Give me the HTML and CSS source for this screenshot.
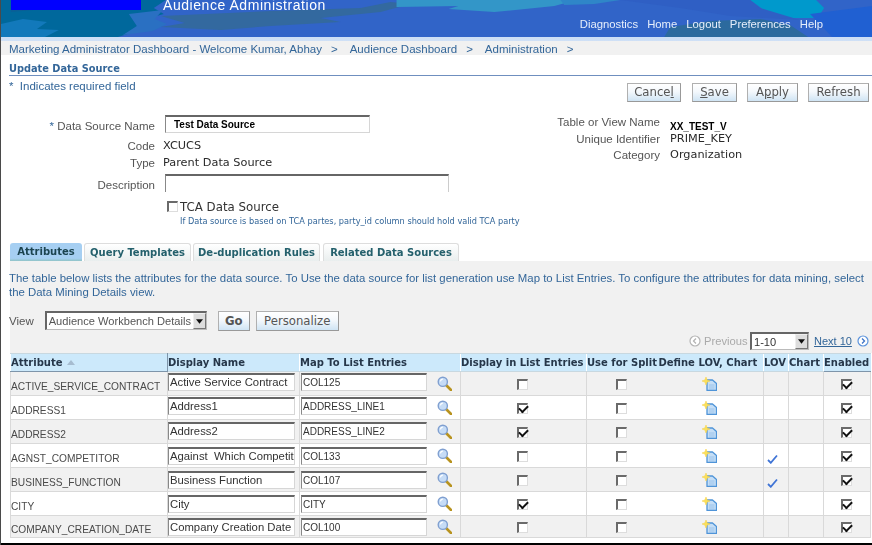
FILE: index.html
```html
<!DOCTYPE html>
<html lang="en">
<head>
<meta charset="utf-8">
<title>Update Data Source</title>
<link rel="stylesheet" href="styles.css">
</head>
<body>
<svg class="defs" width="0" height="0" aria-hidden="true">
  <defs>
    <symbol id="i-search" viewBox="0 0 15 15">
      <path d="M9 9l5 5" stroke="#b8931f" stroke-width="2.6" stroke-linecap="round"/>
      <circle cx="5.8" cy="5.8" r="4.6" fill="#c6dcf6" stroke="#7f9fd0" stroke-width="1.4"/>
      <path d="M3.4 5.4a2.6 2.6 0 0 1 2.4-2.2" fill="none" stroke="#fff" stroke-width="1.2"/>
    </symbol>
    <symbol id="i-doc" viewBox="0 0 15 14">
      <path d="M5 3h5.500l4 3.500V13.500H5z" fill="#c5def6" stroke="#4f94d8" stroke-width="1.3" stroke-linejoin="round"/>
      <path d="M7 8h5.500M7 10h5.500M7 12h5.500" stroke="#8fbcea" stroke-width=".8"/>
      <path d="M4 0l1.100 2.900L8 4 5.100 5.100 4 8 2.900 5.100 0 4l2.900-1.100z" fill="#fbe05a" stroke="#f6cf3e" stroke-width=".5"/>
    </symbol>
    <symbol id="i-tick" viewBox="0 0 11 10">
      <path d="M1 6l2.800 2.800L10 1.500" fill="none" stroke="#3f74d6" stroke-width="1.800"/>
    </symbol>
    <symbol id="i-prev" viewBox="0 0 12 12">
      <circle cx="6" cy="6" r="5" fill="#fff" stroke="#b4b4b4" stroke-width="1.200"/>
      <path d="M7 3.500L4.500 6 7 8.500" fill="none" stroke="#b4b4b4" stroke-width="1.300"/>
    </symbol>
    <symbol id="i-next" viewBox="0 0 12 12">
      <circle cx="6" cy="6" r="5" fill="#fff" stroke="#5c93dc" stroke-width="1.200"/>
      <path d="M5 3.500L7.500 6 5 8.500" fill="none" stroke="#3f74c6" stroke-width="1.300"/>
    </symbol>
    <symbol id="i-down" viewBox="0 0 8 5">
      <path d="M0 0h8L4 5z" fill="#111"/>
    </symbol>
  </defs>
</svg>

<div class="page">
  <header class="banner">
    <svg class="banner-art" viewBox="0 0 872 37" preserveAspectRatio="none" aria-hidden="true">
      <rect width="872" height="37" fill="#3164c8"/>
      <path d="M0 0h165l-12 8 10 6-22 6 6 8-30 9H0z" fill="#00689c"/>
      <path d="M0 24l22-5 24 3-10 7 22 1-14 7H0z" fill="#1279bb"/>
      <path d="M10 0h20l-8 5 10 5-22 2z" fill="#0a5f96"/>
      <path d="M128 14l34-4-8 9 12 5-14 7-30 4 14-9z" fill="#2a70c2"/>
      <path d="M160 16l110-5 90-3 30-6 20 2-30 8-60 6 20 4-70 4-50 4-60-3 24-4z" fill="#33699f"/>
      <path d="M396 0h180l-22 6-60 6-46-3 10-3-62 1z" fill="#3396c8"/>
      <path d="M560 0h60l-26 4-30 1z" fill="#2f86c8"/>
      <path d="M750 0h66l8 8-6 10-30 0-24-8z" fill="#0099cc"/>
      <path d="M664 37l6-10 40-6 50-2 30 6 18 12z" fill="#2c6a9e"/>
      <path d="M810 14l62-8v31h-40z" fill="#2060d2"/>
      <path d="M620 0h130l10 8 40 12-70-4-50-8z" fill="#2f5fc4"/>
    </svg>
    <div class="brand-block"></div>
    <h1 class="app-title">Audience Administration</h1>
    <nav class="global-nav">
      <a>Diagnostics</a><a>Home</a><a>Logout</a><a>Preferences</a><a>Help</a>
    </nav>
  </header>

  <div class="crumbs">
    <a>Marketing Administrator Dashboard - Welcome Kumar, Abhay</a><b>&gt;</b>
    <a>Audience Dashboard</a><b>&gt;</b>
    <a>Administration</a><b>&gt;</b>
  </div>

  <h2 class="page-title">Update Data Source</h2>

  <div class="action-row">
    <p class="required">*&nbsp; Indicates required field</p>
    <div class="actions">
      <button class="btn btn-cancel">Cance<u>l</u></button>
      <button class="btn btn-save"><u>S</u>ave</button>
      <button class="btn btn-apply">A<u>p</u>ply</button>
      <button class="btn btn-refresh">Refresh</button>
    </div>
  </div>

  <section class="details">
    <div class="form-left">
      <label class="lbl"><span class="star">*</span> Data Source Name</label>
      <input class="field field-name" value="Test Data Source" readonly>
      <span class="lbl">Code</span><span class="val">XCUCS</span>
      <span class="lbl">Type</span><span class="val">Parent Data Source</span>
      <label class="lbl">Description</label>
      <input class="field field-desc" readonly>
      <span></span>
      <div class="tca">
        <input type="checkbox" class="chk" aria-label="TCA Data Source">
        <div>
          <span class="tca-label">TCA Data Source</span>
          <p class="tca-help">If Data source is based on TCA partes, party_id column should hold valid TCA party</p>
        </div>
      </div>
    </div>
    <div class="form-right">
      <span class="lbl">Table or View Name</span><span class="val val-strong">XX_TEST_V</span>
      <span class="lbl">Unique Identifier</span><span class="val">PRIME_KEY</span>
      <span class="lbl">Category</span><span class="val">Organization</span>
    </div>
  </section>

  <div class="tabs">
    <a class="tab tab-on tab-1">Attributes</a>
    <a class="tab tab-2">Query Templates</a>
    <a class="tab tab-3">De-duplication Rules</a>
    <a class="tab tab-4">Related Data Sources</a>
  </div>

  <section class="panel">
    <p class="intro">The table below lists the attributes for the data source. To Use the data source for list generation use Map to List Entries. To configure the attributes for data mining, select the Data Mining Details view.</p>
    <div class="view-row">
      <span class="view-label">View</span>
      <div class="select select-view"><span>Audience Workbench Details</span><i class="arrow"><svg><use href="#i-down"/></svg></i></div>
      <button class="btn btn-go">Go</button>
      <button class="btn btn-pers">Personalize</button>
    </div>
    <div class="pager">
      <svg class="pg-icon"><use href="#i-prev"/></svg>
      <span class="pg-prev">Previous</span>
      <div class="select select-page"><span>1-10</span><i class="arrow"><svg><use href="#i-down"/></svg></i></div>
      <a class="pg-next">Next 10</a>
      <svg class="pg-icon"><use href="#i-next"/></svg>
    </div>
  </section>

  <table class="grid">
    <colgroup>
      <col class="c1"><col class="c2"><col class="c3"><col class="c4"><col class="c5"><col class="c6"><col class="c7"><col class="c8"><col class="c9">
    </colgroup>
    <thead>
      <tr>
        <th class="th-sort">Attribute <span class="sort"></span></th>
        <th>Display Name</th>
        <th>Map To List Entries</th>
        <th>Display in List Entries</th>
        <th class="no-r">Use for Split</th>
        <th class="no-l">Define LOV, Chart</th>
        <th>LOV</th>
        <th>Chart</th>
        <th class="th-en">Enabled</th>
      </tr>
    </thead>
    <tbody>
      <tr>
        <td class="attr">ACTIVE_SERVICE_CONTRACT</td>
        <td><input class="field cell-in" value="Active Service Contract" readonly></td>
        <td class="map"><input class="field cell-in" value="COL125" readonly><svg class="ic-search"><use href="#i-search"/></svg></td>
        <td class="ctr"><input type="checkbox" class="chk" aria-label="Display"></td>
        <td class="ctr no-r"><input type="checkbox" class="chk" aria-label="Split"></td>
        <td class="ctr no-l"><svg class="ic-doc"><use href="#i-doc"/></svg></td>
        <td></td><td></td>
        <td class="ctr"><input type="checkbox" class="chk" checked aria-label="Enabled"></td>
      </tr>
      <tr>
        <td class="attr">ADDRESS1</td>
        <td><input class="field cell-in" value="Address1" readonly></td>
        <td class="map"><input class="field cell-in" value="ADDRESS_LINE1" readonly><svg class="ic-search"><use href="#i-search"/></svg></td>
        <td class="ctr"><input type="checkbox" class="chk" checked aria-label="Display"></td>
        <td class="ctr no-r"><input type="checkbox" class="chk" aria-label="Split"></td>
        <td class="ctr no-l"><svg class="ic-doc"><use href="#i-doc"/></svg></td>
        <td></td><td></td>
        <td class="ctr"><input type="checkbox" class="chk" checked aria-label="Enabled"></td>
      </tr>
      <tr>
        <td class="attr">ADDRESS2</td>
        <td><input class="field cell-in" value="Address2" readonly></td>
        <td class="map"><input class="field cell-in" value="ADDRESS_LINE2" readonly><svg class="ic-search"><use href="#i-search"/></svg></td>
        <td class="ctr"><input type="checkbox" class="chk" checked aria-label="Display"></td>
        <td class="ctr no-r"><input type="checkbox" class="chk" aria-label="Split"></td>
        <td class="ctr no-l"><svg class="ic-doc"><use href="#i-doc"/></svg></td>
        <td></td><td></td>
        <td class="ctr"><input type="checkbox" class="chk" checked aria-label="Enabled"></td>
      </tr>
      <tr>
        <td class="attr">AGNST_COMPETITOR</td>
        <td><input class="field cell-in" value="Against  Which Competitor" readonly></td>
        <td class="map"><input class="field cell-in" value="COL133" readonly><svg class="ic-search"><use href="#i-search"/></svg></td>
        <td class="ctr"><input type="checkbox" class="chk" aria-label="Display"></td>
        <td class="ctr no-r"><input type="checkbox" class="chk" aria-label="Split"></td>
        <td class="ctr no-l"><svg class="ic-doc"><use href="#i-doc"/></svg></td>
        <td class="lov"><svg class="ic-tick"><use href="#i-tick"/></svg></td><td></td>
        <td class="ctr"><input type="checkbox" class="chk" checked aria-label="Enabled"></td>
      </tr>
      <tr>
        <td class="attr">BUSINESS_FUNCTION</td>
        <td><input class="field cell-in" value="Business Function" readonly></td>
        <td class="map"><input class="field cell-in" value="COL107" readonly><svg class="ic-search"><use href="#i-search"/></svg></td>
        <td class="ctr"><input type="checkbox" class="chk" aria-label="Display"></td>
        <td class="ctr no-r"><input type="checkbox" class="chk" aria-label="Split"></td>
        <td class="ctr no-l"><svg class="ic-doc"><use href="#i-doc"/></svg></td>
        <td class="lov"><svg class="ic-tick"><use href="#i-tick"/></svg></td><td></td>
        <td class="ctr"><input type="checkbox" class="chk" checked aria-label="Enabled"></td>
      </tr>
      <tr>
        <td class="attr">CITY</td>
        <td><input class="field cell-in" value="City" readonly></td>
        <td class="map"><input class="field cell-in" value="CITY" readonly><svg class="ic-search"><use href="#i-search"/></svg></td>
        <td class="ctr"><input type="checkbox" class="chk" checked aria-label="Display"></td>
        <td class="ctr no-r"><input type="checkbox" class="chk" aria-label="Split"></td>
        <td class="ctr no-l"><svg class="ic-doc"><use href="#i-doc"/></svg></td>
        <td></td><td></td>
        <td class="ctr"><input type="checkbox" class="chk" checked aria-label="Enabled"></td>
      </tr>
      <tr class="last">
        <td class="attr">COMPANY_CREATION_DATE</td>
        <td><input class="field cell-in" value="Company Creation Date" readonly></td>
        <td class="map"><input class="field cell-in" value="COL100" readonly><svg class="ic-search"><use href="#i-search"/></svg></td>
        <td class="ctr"><input type="checkbox" class="chk" aria-label="Display"></td>
        <td class="ctr no-r"><input type="checkbox" class="chk" aria-label="Split"></td>
        <td class="ctr no-l"><svg class="ic-doc"><use href="#i-doc"/></svg></td>
        <td></td><td></td>
        <td class="ctr"><input type="checkbox" class="chk" checked aria-label="Enabled"></td>
      </tr>
    </tbody>
  </table>
  <div class="bottom-edge"></div>
</div>
</body>
</html>
```

FILE: styles.css
```css
* { box-sizing: border-box; }
html, body { margin: 0; padding: 0; height: 100%; background: #fff; overflow: hidden; }
.defs { position: absolute; }
body { font-family: "Liberation Sans", Arial, sans-serif; font-size: 12px; color: #333; }
p, h1, h2 { margin: 0; }

.page {
  width: 872px; height: 545px; overflow: hidden;
  display: flex; flex-direction: column;
  border-left: 1px solid #4a4a4a;
  filter: blur(.35px);
}

/* Banner */
.banner {
  position: relative; flex: 0 0 41px; height: 41px;
  border-bottom: 4px solid #a8c4ee;
  border-image: linear-gradient(#7fa8e8, #cfe0f6) 1;
  display: flex; align-items: flex-start;
  padding-left: 10px;
}
.banner-art { position: absolute; left: 0; top: 0; width: 100%; height: 37px; }
.brand-block { position: relative; width: 130px; height: 10px; background: #0000ff; }
.app-title {
  position: relative; margin: 0 0 0 22px;
  font-size: 14px; font-weight: 400; line-height: 11px; color: #fff; letter-spacing: .55px;
}
.global-nav {
  position: absolute; right: 49px; top: 17px;
  display: flex; gap: 9px; color: #e6eefb; font-size: 11.300px; line-height: 14px;
}

/* Breadcrumb */
.crumbs {
  flex: 0 0 14px; height: 14px; background: #f1f1f1; color: #336699; font-size: 11.500px;
  padding-left: 8px; line-height: 17px; white-space: nowrap; display: flex;
}
.crumbs b { font-weight: 400; margin: 0 12px 0 9px; }

/* Title */
.page-title {
  margin: 7px 0 0 8px; height: 14px; line-height: 13px;
  font-weight: 700; color: #336699;
  border-bottom: 1px solid #6f8fbf; flex: none;
  font-family: "DejaVu Sans", sans-serif; font-size: 9.800px;
}

.action-row { display: flex; justify-content: space-between; padding: 6px 3px 0 8px; flex: none; height: 29px; }
.required { color: #336699; line-height: 12px; font-size: 11.500px; margin-top: -2px; }
.actions { display: flex; gap: 10px; margin-top: 1px; }

.btn {
  height: 19px; padding: 0; font: 400 11.700px/15px "DejaVu Sans", sans-serif; color: #555;
  border: 1px solid #b0b0b0; border-right-color: #999; border-bottom-color: #999;
  background: linear-gradient(#fff 0%, #f4f8fc 45%, #cfe4f4 100%);
}
.btn-cancel { width: 54px; margin-right: 1px; }
.btn-save { width: 45px; }
.btn-apply { width: 51px; }
.btn-refresh { width: 61px; }

/* Details */
.details { flex: none; height: 138px; display: flex; }
.form-left {
  display: grid; grid-template-columns: 154px auto; column-gap: 10px;
  grid-template-rows: 18px 20px 17px 22px auto; align-items: end; align-content: start;
  padding-top: 10px; width: 530px;
}
.form-right {
  display: grid; grid-template-columns: 129px auto; column-gap: 10px;
  grid-auto-rows: 16.500px; align-items: center; align-content: start; padding-top: 9px;
}
.lbl { text-align: right; color: #555; font-size: 11.500px; line-height: 14px; white-space: nowrap; }
.star { color: #336699; }
.val { font: 400 11.300px/14px "DejaVu Sans", sans-serif; color: #2a2a2a; white-space: nowrap; }
.form-left .val { margin-left: -2px; }
.val-strong { font: 700 10px/14px "Liberation Sans", sans-serif; color: #000; align-self: end; margin-bottom: -3px; }
.field {
  display: block; margin: 0; background: #fff; color: #333;
  border: 1px solid #d6d6d6; border-top: 2px solid #666; border-left: 1px solid #888;
  font: 400 11.300px "Liberation Sans", sans-serif; padding: 0 0 0 1px; outline: 0;
}
.field-name { width: 205px; height: 18px; padding-left: 8px; font: 700 10px "Liberation Sans", sans-serif; color: #000; }
.field-desc { width: 284px; height: 18px; border-bottom: 0; border-right: 1px solid #ccc; }
.tca { display: flex; gap: 2px; margin: 9px 0 0 2px; }
.tca-label { font: 400 11.800px/12px "DejaVu Sans", sans-serif; color: #333; display: block; }
.tca-help { font: 400 8.200px/12px "DejaVu Sans", sans-serif; color: #336699; white-space: nowrap; margin-top: 2px; }

.chk {
  appearance: none; -webkit-appearance: none; margin: 0; flex: none;
  width: 11px; height: 11px; background: #fff; position: relative; display: inline-block;
  border: 1px solid #ddd; border-top: 2px solid #6a6a6a; border-left: 2px solid #6a6a6a;
  vertical-align: middle;
}
.chk:checked::after {
  content: ""; position: absolute; left: 0; top: 0; width: 7px; height: 4px;
  border-left: 2px solid #111; border-bottom: 2px solid #111; transform: rotate(-45deg);
}

/* Tabs */
.tabs { flex: none; height: 18px; display: flex; padding-left: 9px; gap: 2px; }
.tab {
  height: 18px; font: 700 10px/18px "DejaVu Sans", sans-serif; color: #24606c; text-align: center;
  background: linear-gradient(#fff, #e9eeee); border: 1px solid #ddd; border-bottom: 0; border-radius: 3px 3px 0 0;
  white-space: nowrap;
}
.tab-on { background: linear-gradient(#a6cff2, #a6cff2 85%, #8fc3c6); color: #1c4450; border: 0; }
.tab-1 { width: 72px; }
.tab-2 { width: 107px; }
.tab-3 { width: 127px; margin-right: 1px; }
.tab-4 { width: 136px; }

/* Panel */
.panel {
  flex: none; height: 92px; margin-left: 9px; background: #f1f1f1; position: relative;
  padding-top: 10px;
}
.intro { color: #336699; font-size: 11.400px; line-height: 14px; width: 864px; margin-left: -1px; }
.view-row { display: flex; align-items: flex-start; margin-top: 12px; height: 20px; }
.view-label { color: #555; font-size: 11.500px; line-height: 20px; margin-right: 11px; margin-left: -1px; }
.select {
  display: flex; justify-content: space-between; align-items: stretch;
  background: #fff; border: 1px solid #bbb; border-top: 2px solid #666; border-left: 2px solid #666;
  height: 19px; font-size: 11.100px; line-height: 16px; color: #555; white-space: nowrap; overflow: hidden;
}
.select span { padding-left: 2px; }
.arrow { display: flex; width: 13px; background: #ddd; border: 1px solid #777; border-top-color: #eee; border-left-color: #eee; align-items: center; justify-content: center; }
.arrow svg { width: 7px; height: 5px; }
.select-view { width: 162px; }
.btn-go { width: 32px; height: 20px; margin-left: 11px; font-weight: 700; }
.btn-pers { width: 83px; height: 20px; margin-left: 6px; }

.pager {
  position: absolute; right: 2px; top: 71px; height: 18px; width: 181px;
  display: flex; align-items: center; font-size: 11.200px;
}
.pg-icon { width: 12px; height: 12px; flex: none; }
.pg-prev { color: #aaa; margin: 0 4px 0 3px; width: 42px; }
.select-page { width: 59px; height: 18px; color: #333; }
.pg-next { color: #336699; text-decoration: underline; margin: 0 5px; font-size: 11px; }

/* Table */
.grid { flex: none; margin-left: 9px; width: 860px; table-layout: fixed; border-collapse: collapse; }
.c1 { width: 157px; } .c2 { width: 132px; } .c3 { width: 161px; } .c4 { width: 126px; }
.c5 { width: 72px; } .c6 { width: 105px; } .c7 { width: 25px; } .c8 { width: 35px; } .c9 { width: 47px; }
.grid th {
  height: 18px; padding: 0; background: #cce9fb; text-align: left; white-space: nowrap; overflow: hidden;
  font: 700 10px/17px "DejaVu Sans", sans-serif; color: #26374a;
  border-left: 1px solid #fff; border-top: 1px solid #c8d8e0; border-bottom: 1px solid #c8d8e0;
}
.grid .th-en { border-bottom: 1px solid #7e95aa; }
.grid .th-sort { border-bottom: 1px solid #7e95aa; border-right: 1px solid #7e95aa; }
.sort { display: inline-block; width: 0; height: 0; border: 4px solid transparent; border-top: 0; border-bottom: 5px solid #a6bcd0; vertical-align: 1px; margin-left: 1px; }
.grid td { height: 24px; padding: 0; border: 1px solid #d9d9d9; vertical-align: middle; overflow: hidden; }
.grid tbody tr:nth-child(odd) td { background: #f1f1f1; }
.grid .last td { height: 22px; }
.grid .no-r { border-right: 0; }
.grid .no-l { border-left: 0; }
.grid .attr { font-size: 10.200px; color: #4a4a4a; padding: 5px 0 0 0; white-space: nowrap; }
.cell-in { width: 127px; height: 18px; }
.map { white-space: nowrap; }
.map .cell-in { display: inline-block; margin-left: 1px; width: 126px; vertical-align: middle; font-size: 10px; }
.grid tbody tr:nth-child(-n+2) .cell-in { margin-top: -4px; }
.grid tbody tr:nth-child(3) .cell-in { margin-top: -2px; }
.grid .ctr { text-align: center; padding-right: 2px; }
.ic-search { width: 15px; height: 15px; vertical-align: middle; margin-left: 10px; }
.ic-doc { width: 15px; height: 14px; vertical-align: middle; display: inline-block; }
.grid .lov { padding: 6px 0 0 2px; }
.ic-tick { width: 11px; height: 10px; display: block; margin-left: 1px; }
.bottom-edge { flex: 1; border-bottom: 2px solid #000; }
```
